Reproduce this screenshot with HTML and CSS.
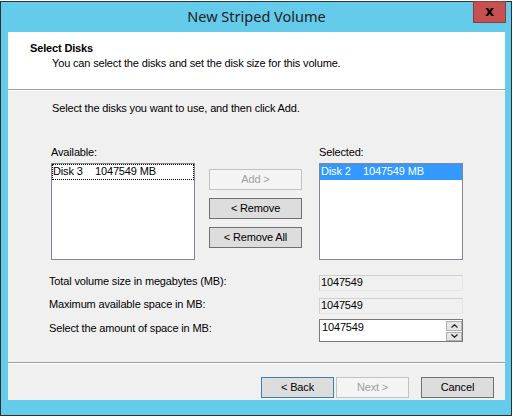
FILE: index.html
```html
<!DOCTYPE html>
<html>
<head>
<meta charset="utf-8">
<link rel="stylesheet" href="styles.css">
</head>
<body>
<div class="window">
  <div class="titlebar">
    <span class="title">New Striped Volume</span>
    <div class="close">x</div>
  </div>
  <div class="client">
    <div class="header">
      <div class="h-title">Select Disks</div>
      <div class="h-sub">You can select the disks and set the disk size for this volume.</div>
    </div>
    <div class="content">
      <div class="intro">Select the disks you want to use, and then click Add.</div>
      <div class="pick">
        <div class="col">
          <div class="lbl">Available:</div>
          <div class="list">
            <div class="item focus"><span class="disk">Disk 3</span>1047549 MB</div>
          </div>
        </div>
        <div class="mid">
          <div class="btn disabled">Add &gt;</div>
          <div class="btn">&lt; Remove</div>
          <div class="btn">&lt; Remove All</div>
        </div>
        <div class="col">
          <div class="lbl">Selected:</div>
          <div class="list">
            <div class="item selected"><span class="disk">Disk 2</span>1047549 MB</div>
          </div>
        </div>
      </div>
      <div class="fields">
        <div class="row r1">
          <div class="flabel">Total volume size in megabytes (MB):</div>
          <div class="ro">1047549</div>
        </div>
        <div class="row r2">
          <div class="flabel">Maximum available space in MB:</div>
          <div class="ro">1047549</div>
        </div>
        <div class="row r3">
          <div class="flabel l3">Select the amount of space in MB:</div>
          <div class="spin">
            <div class="input">1047549</div>
            <div class="arrows">
              <div class="arr"><svg width="7" height="4" viewBox="0 0 7 4"><path d="M0.5 3.5 L3.5 0.8 L6.5 3.5" fill="none" stroke="#222" stroke-width="1.3"/></svg></div>
              <div class="arr"><svg width="7" height="4" viewBox="0 0 7 4"><path d="M0.5 0.5 L3.5 3.2 L6.5 0.5" fill="none" stroke="#222" stroke-width="1.3"/></svg></div>
            </div>
          </div>
        </div>
      </div>
    </div>
    <div class="footer">
      <div class="btn fbtn default">&lt; Back</div>
      <div class="btn fbtn disabled next">Next &gt;</div>
      <div class="btn fbtn cancel">Cancel</div>
    </div>
  </div>
</div>
</body>
</html>
```

FILE: styles.css
```css
html, body {
  margin: 0;
  padding: 0;
  background: #ffffff;
}
body {
  font-family: "Liberation Sans", Arial, sans-serif;
  font-size: 11px;
  line-height: 13px;
  letter-spacing: -0.15px;
  color: #000;
}
.window {
  margin-top: 1px;
  width: 512px;
  box-sizing: border-box;
  border: 1px solid #2f2f2f;
  background: #65cbea;
  padding: 0 6px 15px 7px;
  position: relative;
}
.titlebar {
  height: 30px;
  display: flex;
  align-items: center;
  justify-content: center;
}
.title {
  font-family: "Noto Sans", "Open Sans", sans-serif;
  font-size: 14.5px;
  line-height: 20px;
  letter-spacing: 0;
  color: #1e1e1e;
  margin-top: -2px;
}
.close {
  position: absolute;
  top: -1px;
  right: 5px;
  width: 33px;
  height: 22px;
  box-sizing: border-box;
  background: #c75050;
  border: 1px solid #8f3b3b;
  color: #000;
  font-family: "DejaVu Sans", sans-serif;
  font-weight: bold;
  font-size: 14px;
  line-height: 18px;
  letter-spacing: 0;
  text-align: center;
}
.client {
  background: #f0f0f0;
  height: 368px;
  display: flex;
  flex-direction: column;
}
.header {
  background: #fff;
  border-bottom: 1px solid #a0a0a0;
  padding-top: 10px;
  height: 47px;
}
.h-title {
  font-weight: bold;
  padding-left: 22px;
}
.h-sub {
  margin-top: 2px;
  padding-left: 44px;
}
.content {
  border-top: 1px solid #fff;
  border-bottom: 1px solid #a0a0a0;
  height: 271px;
  display: flex;
  flex-direction: column;
}
.intro {
  margin-top: 11px;
  padding-left: 44px;
}
.pick {
  margin-top: 31px;
  display: flex;
  padding-left: 43px;
}
.col {
  display: flex;
  flex-direction: column;
  width: 144px;
}
.lbl {
  height: 13px;
  margin-bottom: 4px;
}
.list {
  width: 144px;
  height: 97px;
  box-sizing: border-box;
  border: 1px solid #828790;
  background: #fff;
}
.item {
  height: 16px;
  box-sizing: border-box;
  padding: 1px 0 0 1px;
  white-space: nowrap;
}
.item.focus {
  border: 1px dotted #000;
  padding: 0;
}
.item.selected {
  background: #3399ff;
  color: #fff;
}
.disk {
  display: inline-block;
  width: 42px;
}
.mid {
  margin: 23px 17px 0 14px;
  display: flex;
  flex-direction: column;
  gap: 8px;
}
.btn {
  width: 93px;
  height: 21px;
  box-sizing: border-box;
  border: 1px solid #707070;
  background: #dddddd;
  display: flex;
  align-items: center;
  justify-content: center;
}
.btn.disabled {
  background: #f4f4f4;
  border-color: #c3c3c3;
  color: #a0a0a0;
}
.fields {
  margin-top: 15px;
  padding-left: 41px;
  display: flex;
  flex-direction: column;
}
.row {
  display: flex;
  align-items: flex-start;
}
.r2 { margin-top: 7px; }
.r3 { margin-top: 5px; }
.flabel {
  width: 270px;
}
.l3 {
  margin-top: 3px;
}
.ro {
  width: 144px;
  height: 16px;
  box-sizing: border-box;
  border: 1px solid #cfcfcf;
  border-right-color: #e6e6e6;
  border-bottom-color: #e6e6e6;
  padding-left: 1px;
  background: #f0f0f0;
}
.spin {
  display: flex;
  width: 144px;
}
.input {
  width: 127px;
  height: 23px;
  box-sizing: border-box;
  border: 1px solid #7a7a7a;
  border-right: none;
  background: #fff;
  padding: 1px 0 0 2px;
}
.arrows {
  width: 17px;
  height: 23px;
  box-sizing: border-box;
  border: 1px solid #7a7a7a;
  border-left: none;
  background: #fff;
  display: flex;
  flex-direction: column;
  padding-top: 1px;
  gap: 1px;
}
.arr {
  width: 16px;
  height: 10px;
  box-sizing: border-box;
  background: #e5e5e5;
  border: 1px solid #b0b0b0;
  display: flex;
  align-items: center;
  justify-content: center;
}
.footer {
  border-top: 1px solid #fff;
  flex: 1;
  display: flex;
  justify-content: flex-end;
  align-items: flex-start;
  padding: 13px 11px 0 0;
}
.fbtn {
  width: 73px;
}
.fbtn.default {
  border-color: #3c7fb1;
}
.fbtn.next {
  margin-left: 2px;
}
.fbtn.cancel {
  margin-left: 12px;
}
```
